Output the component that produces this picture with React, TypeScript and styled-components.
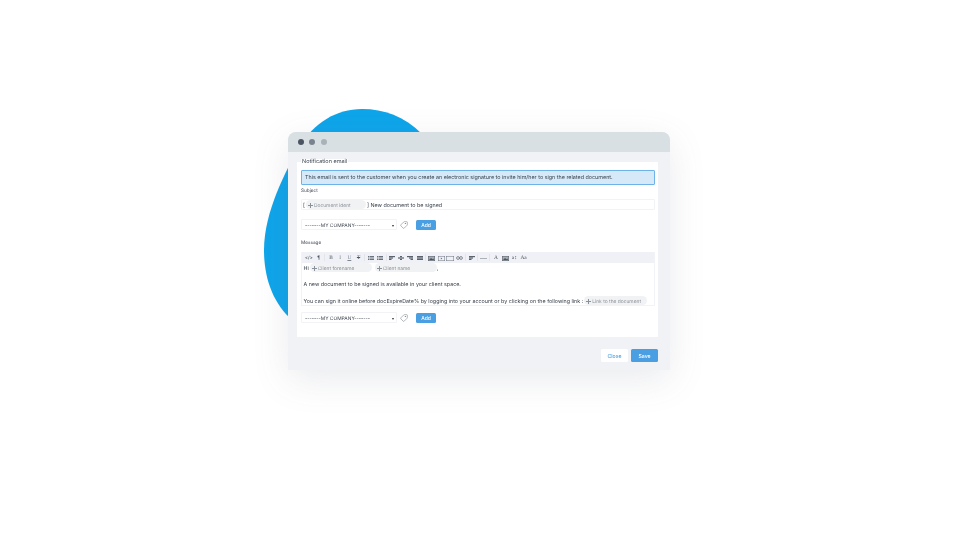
import styled, { createGlobalStyle } from 'styled-components';
import { Tag } from 'lucide-react';

const GlobalStyle = createGlobalStyle`
  html, body {
    margin: 0;
    padding: 0;
    background: #fff;
    font-family: Inter, 'Liberation Sans', sans-serif;
    text-rendering: geometricPrecision;
  }
`;

const Page = styled.div`
  position: relative;
  width: 960px;
  height: 540px;
  padding: 132px 0 0 288px;
  box-sizing: border-box;
  overflow: hidden;
`;

const Blob = styled.svg`
  position: absolute;
  left: 250px;
  top: 100px;
`;

const Window = styled.div`
  position: relative;
  width: 382px;
  height: 238px;
  display: flex;
  flex-direction: column;
  border-radius: 8px 8px 0 0;
  background: #f0f2f6;
  box-shadow: 0 10px 36px rgba(90, 100, 120, 0.13);
  overflow: hidden;
  will-change: transform;
`;

const TitleBar = styled.div`
  height: 20px;
  flex: none;
  display: flex;
  align-items: center;
  gap: 5.5px;
  padding-left: 9.7px;
  background: #d9e0e3;
`;

const Dot = styled.span<{ $color: string }>`
  width: 6px;
  height: 6px;
  border-radius: 50%;
  background: ${({ $color }) => $color};
`;

const Body = styled.div`
  flex: 1;
  display: flex;
  flex-direction: column;
  padding: 10px 12px 8px 9px;
`;

const Panel = styled.div`
  position: relative;
  height: 175px;
  flex: none;
  box-sizing: border-box;
  padding: 8px 3px 0 4px;
  background: #fff;
`;

const Legend = styled.span`
  position: absolute;
  left: 4px;
  top: -3px;
  padding: 0 1px;
  background: #fff;
  font-size: 5.5px;
  line-height: 7px;
  color: #3e4650;
`;

const InfoBox = styled.div`
  height: 15px;
  box-sizing: border-box;
  display: flex;
  align-items: center;
  padding: 1px 0 0 3px;
  background: #d5e9f8;
  border: 1px solid #6db3ea;
  border-radius: 1px;
  font-size: 5.4px;
  color: #39424d;
  white-space: nowrap;
`;

const FieldLabel = styled.div<{ $top: number; $bottom: number }>`
  margin-top: ${({ $top }) => $top}px;
  margin-bottom: ${({ $bottom }) => $bottom}px;
  font-size: 4.7px;
  line-height: 6px;
  color: #3e4650;
`;

const SubjectField = styled.div`
  height: 11px;
  box-sizing: border-box;
  display: flex;
  align-items: center;
  padding: 2px 0 0 1px;
  border: 1px solid #f1f3f6;
  border-radius: 1px;
  font-size: 5.4px;
  color: #3a424c;
  white-space: nowrap;
`;

const Chip = styled.span<{ $width: number; $gap?: number }>`
  display: inline-flex;
  align-items: center;
  gap: 1px;
  width: ${({ $width }) => $width}px;
  height: 9px;
  margin: -2px ${({ $gap }) => $gap ?? 1}px 0 1px;
  padding: 2px 0 0 2px;
  box-sizing: border-box;
  border-radius: 4.5px;
  background: #f1f2f4;
  font-size: 4.9px;
  color: #8b9198;
  white-space: nowrap;

  svg {
    flex: none;
    margin-top: -1px;
  }
`;

const TagRow = styled.div<{ $top: number }>`
  display: flex;
  align-items: center;
  height: 11px;
  margin-top: ${({ $top }) => $top}px;
`;

const SelectBox = styled.div`
  width: 96px;
  height: 11px;
  box-sizing: border-box;
  display: flex;
  align-items: center;
  justify-content: space-between;
  padding: 2px 2px 0 3px;
  border: 1px solid #f1f3f6;
  border-radius: 1px;
  font-size: 4.9px;
  color: #3a424c;
  white-space: nowrap;
`;

const Caret = styled.span`
  width: 0;
  height: 0;
  border-left: 1.5px solid transparent;
  border-right: 1.5px solid transparent;
  border-top: 2px solid #333;
`;

const TagIcon = styled(Tag)`
  margin-left: 3px;
  transform: scaleX(-1);
`;

const AddButton = styled.button`
  width: 20px;
  height: 10px;
  margin-left: 8px;
  padding: 0;
  border: 0;
  border-radius: 1.5px;
  background: #4a9fe2;
  color: #fff;
  font: 500 5px Inter, sans-serif;
`;

const Editor = styled.div`
  height: 54px;
  box-sizing: border-box;
  border: 1px solid #f1f3f6;
  border-top: 0;
  border-radius: 1px;
`;

const Toolbar = styled.div`
  height: 11px;
  display: flex;
  align-items: center;
  padding-left: 1.5px;
  background: #eff1f6;
`;

const ToolButton = styled.span<{ $width?: number; $muted?: boolean; $bold?: boolean }>`
  width: ${({ $width }) => $width ?? 9.2}px;
  height: 11px;
  flex: none;
  display: flex;
  align-items: center;
  justify-content: center;
  padding-top: 1px;
  box-sizing: border-box;
  color: ${({ $muted }) => ($muted ? '#7f8790' : '#4a525c')};
  font-size: 5.4px;
  font-weight: ${({ $bold }) => ($bold ? 700 : 400)};
  font-family: 'Liberation Serif', serif;
`;

const CodeGlyph = styled.span`
  font-family: Inter, sans-serif;
  font-size: 4.4px;
  font-weight: 500;
`;

const StrikeGlyph = styled.span`
  text-decoration: line-through;
`;

const ToolSeparator = styled.span`
  width: 1px;
  height: 7px;
  margin: 0 1px;
  flex: none;
  background: #e3e5ea;
`;

const EditorLine = styled.div<{ $top: number }>`
  display: flex;
  align-items: center;
  height: 9px;
  margin-top: ${({ $top }) => $top}px;
  padding: 2px 0 0 1.5px;
  box-sizing: border-box;
  font-size: 5.37px;
  color: #3a424c;
  white-space: nowrap;
`;

const Footer = styled.div`
  display: flex;
  justify-content: flex-end;
  gap: 3px;
  margin-top: 12px;
`;

const FooterButton = styled.button<{ $primary?: boolean }>`
  width: 27px;
  height: 13px;
  padding: 0;
  border: 0;
  border-radius: 1.5px;
  background: ${({ $primary }) => ($primary ? '#4a9fe2' : '#fff')};
  color: ${({ $primary }) => ($primary ? '#fff' : '#4a9fe2')};
  font: 500 5.2px Inter, sans-serif;
`;

const MoveIcon = () => (
  <svg width="5" height="5" viewBox="0 0 6 6">
    <path d="M3 0v6M0 3h6" stroke="#8b9198" strokeWidth="1.2" />
  </svg>
);

const ListIcon = () => (
  <svg width="6" height="4" viewBox="0 0 6 4" fill="#6a727c">
    <path d="M0 0h1.2v1.1H0zM1.7 0H6v1.1H1.7zM0 1.5h1.2v1.1H0zM1.7 1.5H6v1.1H1.7zM0 2.9h1.2V4H0zM1.7 2.9H6V4H1.7z" />
  </svg>
);

// the align icons read as three stacked bars of different lengths
const AlignIcon = ({ bars }: { bars: [number, number][] }) => (
  <svg width="6" height="4" viewBox="0 0 6 4" fill="#5a626c">
    {bars.map(([x, w], i) => (
      <rect key={i} x={x} y={i * 1.4} width={w} height="1.2" />
    ))}
  </svg>
);

const ImageIcon = () => (
  <svg width="7" height="5" viewBox="0 0 7 5">
    <rect x="0.3" y="0.3" width="6.4" height="4.4" fill="#a6acb3" stroke="#59616b" strokeWidth="0.6" />
    <path d="M1 4l2-2 1.5 1.2L5.5 2.5 6 4z" fill="#4a525c" />
  </svg>
);

const VideoIcon = () => (
  <svg width="7" height="5" viewBox="0 0 7 5">
    <rect x="0.25" y="0.25" width="6.5" height="4.5" fill="none" stroke="#6a727c" strokeWidth="0.5" />
    <path d="M2.8 1.5v2l1.6-1z" fill="#6a727c" />
  </svg>
);

const BoxIcon = () => (
  <svg width="8" height="5" viewBox="0 0 8 5">
    <rect x="0.25" y="0.25" width="7.5" height="4.5" fill="none" stroke="#6a727c" strokeWidth="0.5" />
  </svg>
);

const LinkIcon = () => (
  <svg width="7" height="4" viewBox="0 0 7 4" fill="none" stroke="#5a626c" strokeWidth="0.7">
    <circle cx="2" cy="2" r="1.4" />
    <circle cx="5" cy="2" r="1.4" />
  </svg>
);

const HrIcon = () => (
  <svg width="7" height="1" viewBox="0 0 7 1">
    <rect width="7" height="0.6" fill="#7f8790" />
  </svg>
);

const ALIGN_LEFT: [number, number][] = [[0, 6], [0, 4], [0, 2.5]];
const ALIGN_CENTER: [number, number][] = [[2, 2], [0, 6], [2, 2]];
const ALIGN_RIGHT: [number, number][] = [[0, 6], [2, 4], [3.5, 2.5]];
const ALIGN_FULL: [number, number][] = [[0, 6], [0, 6], [0, 6]];

function TemplateRow({ top }: { top: number }) {
  return (
    <TagRow $top={top}>
      <SelectBox>
        -------MY COMPANY-------
        <Caret />
      </SelectBox>
      <TagIcon size={8} strokeWidth={1.3} color="#555d66" />
      <AddButton>Add</AddButton>
    </TagRow>
  );
}

function App() {
  return (
    <>
      <GlobalStyle />
      <Page>
        <Blob width="180" height="230" viewBox="250 100 180 230">
          <path
            d="M422 134C404 116 384 109 362 109C336 109 314 123 300 146C286 170 264 212 264 250C264 280 274 304 292 320L422 320Z"
            fill="#0ea5ea"
          />
        </Blob>
        <Window>
          <TitleBar>
            <Dot $color="#4a5463" />
            <Dot $color="#79838f" />
            <Dot $color="#a9b2b9" />
          </TitleBar>
          <Body>
            <Panel>
              <Legend>Notification email</Legend>
              <InfoBox>
                This email is sent to the customer when you create an electronic signature to invite him/her to sign the related document.
              </InfoBox>
              <FieldLabel $top={3} $bottom={5}>Subject</FieldLabel>
              <SubjectField>
                [
                <Chip $width={60}>
                  <MoveIcon />
                  Document ident
                </Chip>
                ] New document to be signed
              </SubjectField>
              <TemplateRow top={9} />
              <FieldLabel $top={10} $bottom={6}>Message</FieldLabel>
              <Editor>
                <Toolbar>
                  <ToolButton $width={10.7}><CodeGlyph>&lt;/&gt;</CodeGlyph></ToolButton>
                  <ToolButton $bold>¶</ToolButton>
                  <ToolSeparator />
                  <ToolButton $muted $bold>B</ToolButton>
                  <ToolButton $muted>I</ToolButton>
                  <ToolButton $muted><u>U</u></ToolButton>
                  <ToolButton><StrikeGlyph>T</StrikeGlyph></ToolButton>
                  <ToolSeparator />
                  <ToolButton><ListIcon /></ToolButton>
                  <ToolButton><ListIcon /></ToolButton>
                  <ToolSeparator />
                  <ToolButton><AlignIcon bars={ALIGN_LEFT} /></ToolButton>
                  <ToolButton><AlignIcon bars={ALIGN_CENTER} /></ToolButton>
                  <ToolButton><AlignIcon bars={ALIGN_RIGHT} /></ToolButton>
                  <ToolButton><AlignIcon bars={ALIGN_FULL} /></ToolButton>
                  <ToolSeparator />
                  <ToolButton><ImageIcon /></ToolButton>
                  <ToolButton><VideoIcon /></ToolButton>
                  <ToolButton><BoxIcon /></ToolButton>
                  <ToolButton><LinkIcon /></ToolButton>
                  <ToolSeparator />
                  <ToolButton><AlignIcon bars={ALIGN_LEFT} /></ToolButton>
                  <ToolSeparator />
                  <ToolButton><HrIcon /></ToolButton>
                  <ToolSeparator />
                  <ToolButton>A</ToolButton>
                  <ToolButton><ImageIcon /></ToolButton>
                  <ToolButton>a↕</ToolButton>
                  <ToolButton>Aa</ToolButton>
                </Toolbar>
                <EditorLine $top={0}>
                  Hi
                  <Chip $width={62} $gap={2}>
                    <MoveIcon />
                    Client forename
                  </Chip>
                  <Chip $width={62} $gap={0}>
                    <MoveIcon />
                    Client name
                  </Chip>
                  ,
                </EditorLine>
                <EditorLine $top={7}>A new document to be signed is available in your client space.</EditorLine>
                <EditorLine $top={8}>
                  You can sign it online before docExpireDate% by logging into your account or by clicking on the following link :
                  <Chip $width={63}>
                    <MoveIcon />
                    Link to the document
                  </Chip>
                </EditorLine>
              </Editor>
              <TemplateRow top={6} />
            </Panel>
            <Footer>
              <FooterButton>Close</FooterButton>
              <FooterButton $primary>Save</FooterButton>
            </Footer>
          </Body>
        </Window>
      </Page>
    </>
  );
}

export default App;
